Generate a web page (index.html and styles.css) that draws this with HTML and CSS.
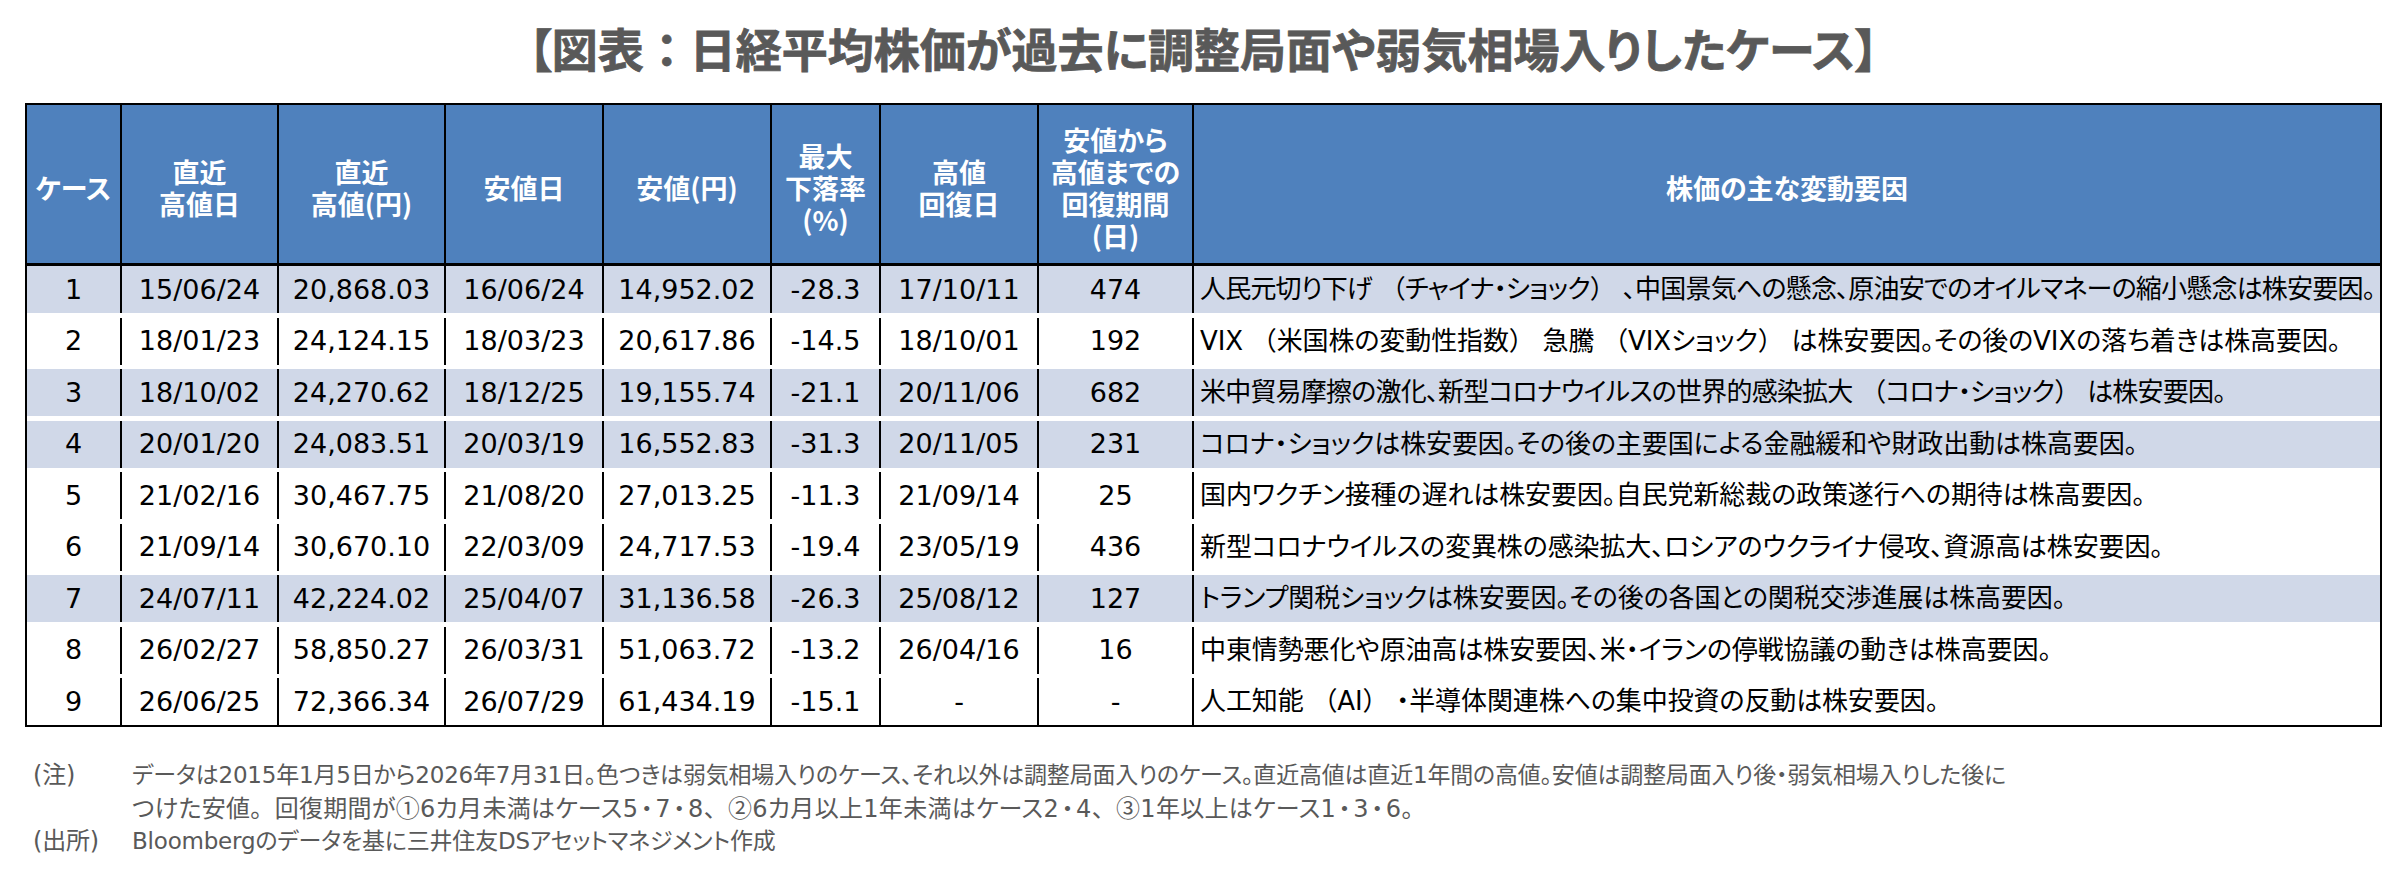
FILE: index.html
```html
<!DOCTYPE html>
<html lang="ja">
<head>
<meta charset="utf-8">
<title>図表</title>
<link rel="stylesheet" href="styles.css">
</head>
<body>
<h1 class="title">【図表<span class="fw">：</span>日経平均株価が過去に調整局面や弱気相場入りしたケース】</h1>
<div class="table">
  <div class="row head">
    <div class="c">ケース</div>
    <div class="c">直近<br>高値日</div>
    <div class="c">直近<br>高値(円)</div>
    <div class="c">安値日</div>
    <div class="c">安値(円)</div>
    <div class="c">最大<br>下落率<br>(%)</div>
    <div class="c">高値<br>回復日</div>
    <div class="c">安値から<br>高値までの<br>回復期間<br>(日)</div>
    <div class="c">株価の主な変動要因</div>
  </div>
  <div class="body">
    <div class="row shade">
      <div class="c">1</div><div class="c">15/06/24</div><div class="c">20,868.03</div><div class="c">16/06/24</div><div class="c">14,952.02</div><div class="c">-28.3</div><div class="c">17/10/11</div><div class="c">474</div>
      <div class="c d tight">人民元切り下げ<span class="po">（</span>チャイナ・ショック<span class="pc">）</span>、中国景気への懸念、原油安でのオイルマネーの縮小懸念は株安要因。</div>
    </div>
    <div class="row">
      <div class="c">2</div><div class="c">18/01/23</div><div class="c">24,124.15</div><div class="c">18/03/23</div><div class="c">20,617.86</div><div class="c">-14.5</div><div class="c">18/10/01</div><div class="c">192</div>
      <div class="c d">VIX<span class="po">（</span>米国株の変動性指数<span class="pc">）</span>急騰<span class="po">（</span>VIXショック<span class="pc">）</span>は株安要因。その後のVIXの落ち着きは株高要因。</div>
    </div>
    <div class="row shade">
      <div class="c">3</div><div class="c">18/10/02</div><div class="c">24,270.62</div><div class="c">18/12/25</div><div class="c">19,155.74</div><div class="c">-21.1</div><div class="c">20/11/06</div><div class="c">682</div>
      <div class="c d tight">米中貿易摩擦の激化、新型コロナウイルスの世界的感染拡大<span class="po">（</span>コロナ・ショック<span class="pc">）</span>は株安要因。</div>
    </div>
    <div class="row shade">
      <div class="c">4</div><div class="c">20/01/20</div><div class="c">24,083.51</div><div class="c">20/03/19</div><div class="c">16,552.83</div><div class="c">-31.3</div><div class="c">20/11/05</div><div class="c">231</div>
      <div class="c d">コロナ・ショックは株安要因。その後の主要国による金融緩和や財政出動は株高要因。</div>
    </div>
    <div class="row">
      <div class="c">5</div><div class="c">21/02/16</div><div class="c">30,467.75</div><div class="c">21/08/20</div><div class="c">27,013.25</div><div class="c">-11.3</div><div class="c">21/09/14</div><div class="c">25</div>
      <div class="c d">国内ワクチン接種の遅れは株安要因。自民党新総裁の政策遂行への期待は株高要因。</div>
    </div>
    <div class="row">
      <div class="c">6</div><div class="c">21/09/14</div><div class="c">30,670.10</div><div class="c">22/03/09</div><div class="c">24,717.53</div><div class="c">-19.4</div><div class="c">23/05/19</div><div class="c">436</div>
      <div class="c d">新型コロナウイルスの変異株の感染拡大、ロシアのウクライナ侵攻、資源高は株安要因。</div>
    </div>
    <div class="row shade">
      <div class="c">7</div><div class="c">24/07/11</div><div class="c">42,224.02</div><div class="c">25/04/07</div><div class="c">31,136.58</div><div class="c">-26.3</div><div class="c">25/08/12</div><div class="c">127</div>
      <div class="c d">トランプ関税ショックは株安要因。その後の各国との関税交渉進展は株高要因。</div>
    </div>
    <div class="row">
      <div class="c">8</div><div class="c">26/02/27</div><div class="c">58,850.27</div><div class="c">26/03/31</div><div class="c">51,063.72</div><div class="c">-13.2</div><div class="c">26/04/16</div><div class="c">16</div>
      <div class="c d">中東情勢悪化や原油高は株安要因、米・イランの停戦協議の動きは株高要因。</div>
    </div>
    <div class="row">
      <div class="c">9</div><div class="c">26/06/25</div><div class="c">72,366.34</div><div class="c">26/07/29</div><div class="c">61,434.19</div><div class="c">-15.1</div><div class="c">-</div><div class="c">-</div>
      <div class="c d">人工知能<span class="po">（</span>AI<span class="pc">）</span>・半導体関連株への集中投資の反動は株安要因。</div>
    </div>
  </div>
</div>
<div class="notes">
  <div class="lbl">(注)</div>
  <div class="txt">データは2015年1月5日から2026年7月31日。色つきは弱気相場入りのケース、それ以外は調整局面入りのケース。直近高値は直近1年間の高値。安値は調整局面入り後・弱気相場入りした後に<br><span class="l2">つけた安値<span class="fw">。</span>回復期間が<span class="cd">①</span>6カ月未満はケース5<span class="dot">・</span>7<span class="dot">・</span>8<span class="fw">、</span><span class="cd">②</span>6カ月以上1年未満はケース2<span class="dot">・</span>4<span class="fw">、</span><span class="cd">③</span>1年以上はケース1<span class="dot">・</span>3<span class="dot">・</span>6<span class="fw">。</span></span></div>
  <div class="lbl">(出所)</div>
  <div class="txt">Bloombergのデータを基に三井住友DSアセットマネジメント作成</div>
</div>
</body>
</html>
```
FILE: styles.css
```css
html, body {
  margin: 0;
  padding: 0;
  background: #ffffff;
}
body {
  width: 2385px;
  font-family: "DejaVu Sans", "Noto Sans CJK JP", sans-serif;
  font-feature-settings: "palt";
  color: #000000;
}
.title {
  margin: 0;
  padding-top: 24px;
  height: 46px;
  line-height: 46px;
  font-size: 46px;
  font-weight: 700;
  font-family: "Noto Sans CJK JP", sans-serif;
  color: #595959;
  -webkit-text-stroke: 0.8px #595959;
  text-align: center;
  width: 2357px;
  margin-left: 25px;
  margin-bottom: 33px;
  white-space: nowrap;
}
.fw {
  font-feature-settings: normal;
}
.table {
  margin-left: 25px;
  width: 2357px;
  box-sizing: border-box;
  border: 2px solid #000000;
  background: #ffffff;
}
.row {
  display: grid;
  grid-template-columns: 93px 157px 167px 158px 168px 109px 158px 155px 1fr;
  height: 47px;
}
.c {
  display: flex;
  align-items: center;
  justify-content: center;
  text-align: center;
  font-size: 27px;
  line-height: 32px;
  box-sizing: border-box;
  white-space: nowrap;
}
.c + .c {
  border-left: 2px solid #000000;
}
.head {
  height: 161px;
  border-bottom: 3px solid #000000;
  box-sizing: border-box;
  background: #4f81bd;
}
.head .c {
  color: #ffffff;
  font-weight: 700;
  font-family: "Noto Sans CJK JP", sans-serif;
  padding-top: 8px;
}
.body {
  display: flex;
  flex-direction: column;
  gap: 4.5px;
}
.shade .c {
  background: #d0d8e8;
}
.c.d {
  display: block;
  text-align: left;
  font-size: 26px;
  line-height: 47px;
  padding-left: 6px;
  letter-spacing: -0.1px;
  overflow: visible;
}
.c.d.tight {
  letter-spacing: -0.8px;
}
.po, .pc {
  font-feature-settings: normal;
  display: inline-block;
}
.po {
  margin-left: 0.3em;
}
.pc {
  margin-right: 0.3em;
}
.notes {
  display: grid;
  grid-template-columns: 99px auto;
  margin-left: 33px;
  margin-top: 32px;
  font-size: 23px;
  line-height: 32px;
  letter-spacing: -0.2px;
  color: #595959;
  white-space: nowrap;
}
.lbl {
  font-size: 24px;
}
.l2 {
  font-size: 24px;
  letter-spacing: 0.3px;
}
.cd {
  font-family: "Noto Sans CJK JP", sans-serif;
  font-feature-settings: normal;
}
.dot {
  font-feature-settings: normal;
  display: inline-block;
  margin: 0 -0.15em;
}
```
